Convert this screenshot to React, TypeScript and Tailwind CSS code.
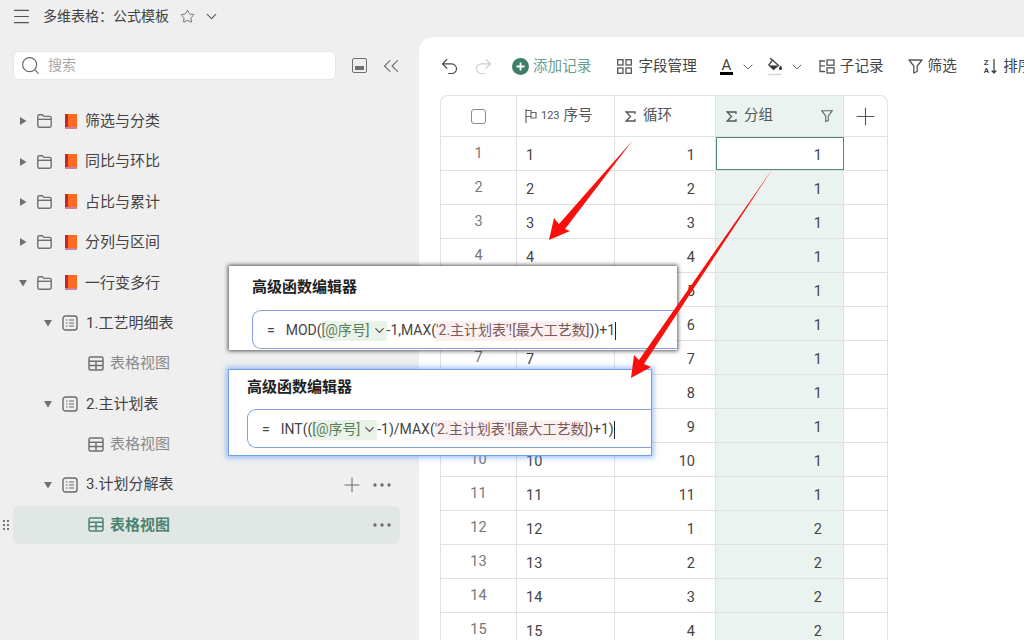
import { ChevronDown, ChevronsLeft, Ellipsis, Menu, Plus, Redo2, Search, Star, Undo2 } from 'lucide-react';

const FONT = 'font-["Roboto","Noto_Sans_CJK_SC",sans-serif]';

function FolderIcon() {
  return (
    <svg width="15" height="14" viewBox="0 0 15 14" fill="none" stroke="#707070" strokeWidth="1.400">
      <path d="M.8 2.400C.8 1.400 1.400.8 2.400.8h3L7 2.400h5.600c1 0 1.600.6 1.600 1.600v7.600c0 1-.6 1.600-1.600 1.600H2.400c-1 0-1.600-.6-1.600-1.600z" />
      <path d="M.8 5.300h13.400" />
    </svg>
  );
}

function BookIcon() {
  return (
    <svg width="12" height="15" viewBox="0 0 12 15">
      <rect x="0" y="0" width="12" height="13.500" fill="#ff6a21" />
      <rect x="0" y="0" width="3" height="13.500" fill="#c6272c" />
      <rect x="0" y="13" width="12" height="2" fill="#c78596" />
    </svg>
  );
}

function ListIcon() {
  return (
    <svg width="16" height="16" viewBox="0 0 16 16" fill="none" stroke="#6b6b6b" strokeWidth="1.400">
      <rect x="1" y="1" width="14" height="14" rx="2.500" />
      <path d="M4 5h1.500M7 5h5M4 8h1.500M7 8h5M4 11h1.500M7 11h5" strokeWidth="1.200" />
    </svg>
  );
}

function GridIcon({ color = '#707070' }: { color?: string }) {
  return (
    <svg width="16" height="15" viewBox="0 0 16 15" fill="none" stroke={color} strokeWidth="1.500">
      <rect x="1" y="1" width="14" height="13" rx="1.500" />
      <path d="M1 5.300h14M1 9.600h14M8 5.300V14" />
    </svg>
  );
}

function SigmaIcon() {
  return (
    <svg width="11" height="11" viewBox="0 0 11 11" fill="none" stroke="#555" strokeWidth="1.300">
      <path d="M10 3V1H1.200l4.300 4.500L1.200 10H10V8" />
    </svg>
  );
}

function Caret({ open }: { open: boolean }) {
  return (
    <svg width="8" height="8" viewBox="0 0 8 8" fill="#707070">
      {open ? <path d="M0 1h8L4 7.500z" /> : <path d="M1 0v8l6.500-4z" />}
    </svg>
  );
}

const tree = [
  { label: '筛选与分类', level: 0 },
  { label: '同比与环比', level: 0 },
  { label: '占比与累计', level: 0 },
  { label: '分列与区间', level: 0 },
  { label: '一行变多行', level: 0, open: true },
  { label: '1.工艺明细表', level: 1 },
  { label: '表格视图', level: 2 },
  { label: '2.主计划表', level: 1 },
  { label: '表格视图', level: 2 },
];

function TreeRow({ row }: { row: (typeof tree)[number] }) {
  if (row.level === 2) {
    return (
      <div className="h-[40.4px] flex items-center pl-[88px] gap-[6px] text-[15px] text-[#8a8a8a]">
        <GridIcon />
        <span>{row.label}</span>
      </div>
    );
  }
  if (row.level === 1) {
    return (
      <div className="h-[40.4px] flex items-center pl-[44px] text-[15px] text-[#444]">
        <Caret open />
        <span className="ml-[10px] mr-[8px]"><ListIcon /></span>
        <span>{row.label}</span>
      </div>
    );
  }
  return (
    <div className="h-[40.4px] flex items-center pl-[19px] text-[15px] text-[#444]">
      <Caret open={!!row.open} />
      <span className="ml-[10px] mr-[13px] flex"><FolderIcon /></span>
      <BookIcon />
      <span className="ml-[8px]">{row.label}</span>
    </div>
  );
}

function Sidebar() {
  return (
    <div className="w-[419px] shrink-0 flex flex-col">
      <div className="h-[32px] flex items-center pl-[11px] text-[#555]">
        <Menu size={21} strokeWidth={1.200} />
        <span className="ml-[11px] text-[14px] text-[#444]">多维表格{'\uFF1A'}公式模板</span>
        <Star size={15} strokeWidth={1.300} className="ml-[11px]" />
        <ChevronDown size={17} strokeWidth={1.500} className="ml-[8px]" />
      </div>
      <div className="mt-[19px] flex items-center pl-[13px]">
        <div className="w-[323px] h-[29px] bg-white rounded-[6px] flex items-center pl-[6px] border border-[#e6e6e6]">
          <Search size={21} strokeWidth={1.300} className="text-[#666]" />
          <span className="ml-[7px] text-[14px] text-[#aaa]">搜索</span>
        </div>
        <div className="ml-[16px] w-[15px] h-[15px] rounded-[2px] border-[1.500px] border-[#707070] flex items-end justify-center pb-[2px]">
          <div className="w-[9px] h-[4px] bg-[#707070]" />
        </div>
        <ChevronsLeft size={26} strokeWidth={1.000} className="ml-[11px] text-[#707070]" />
      </div>
      <div className="mt-[21px]">
        {tree.map((row, i) => (
          <TreeRow key={i} row={row} />
        ))}
        <div className="h-[40.4px] flex items-center pl-[44px] pr-[25px] text-[15px] text-[#444]">
          <Caret open />
          <span className="ml-[10px] mr-[8px]"><ListIcon /></span>
          <span>3.计划分解表</span>
          <Plus size={24} strokeWidth={1.000} className="ml-auto text-[#666]" />
          <Ellipsis size={24} strokeWidth={1.300} className="ml-[6px] text-[#666]" />
        </div>
        <div className="relative h-[38px] ml-[13px] mr-[19px] mt-[1px] bg-[#e1e7e4] rounded-[6px] flex items-center pl-[75px] pr-[6px] gap-[6px] text-[15px] font-bold text-[#4b8270]">
          <div className="absolute left-[-10px] top-[14px] grid grid-cols-2 gap-x-[2px] gap-y-[2px]">
            {[0, 1, 2, 3, 4, 5].map((d) => (
              <span key={d} className="w-[2px] h-[2px] bg-[#777]" />
            ))}
          </div>
          <GridIcon color="#4b8270" />
          <span>表格视图</span>
          <Ellipsis size={24} strokeWidth={1.300} className="ml-auto text-[#666]" />
        </div>
      </div>
    </div>
  );
}

function Toolbar() {
  return (
    <div className="h-[58px] flex items-center pl-[20px] pt-[1px] whitespace-nowrap text-[14.600px] text-[#444] [&>*]:shrink-0">
      <Undo2 size={21} strokeWidth={1.300} />
      <Redo2 size={21} strokeWidth={1.300} className="ml-[13px] text-[#ccc]" />
      <svg className="ml-[18px]" width="17" height="17" viewBox="0 0 17 17">
        <circle cx="8.500" cy="8.500" r="8.500" fill="#3f7d6b" />
        <path d="M8.500 4.500v8M4.500 8.500h8" stroke="#fff" strokeWidth="1.800" />
      </svg>
      <span className="ml-[4px] text-[#6a9c8d]">添加记录</span>
      <svg className="ml-[26px]" width="15" height="15" viewBox="0 0 15 15" fill="none" stroke="#555" strokeWidth="1.300">
        <rect x="0.700" y="0.700" width="5.300" height="5.300" />
        <rect x="9" y="0.700" width="5.300" height="5.300" />
        <rect x="0.700" y="9" width="5.300" height="5.300" />
        <rect x="9" y="9" width="5.300" height="5.300" />
      </svg>
      <span className="ml-[6px]">字段管理</span>
      <span className="ml-[23px] w-[13px] flex flex-col items-center text-[15px] leading-[14px] text-[#444]">
        A<span className="w-[13px] h-[3px] bg-black" />
      </span>
      <ChevronDown size={16} strokeWidth={1.500} className="ml-[7px] text-[#666]" />
      <svg className="ml-[11px]" width="17" height="19" viewBox="0 0 17 19" fill="none" stroke="#444" strokeWidth="1.300">
        <path d="M3 1 5.500 3.500" />
        <path d="M5.500 3 11.500 8.500 6.500 12.500 1.800 8z" />
        <path d="M2.500 8.500h8L6.500 12.500z" fill="#333" stroke="none" />
        <path d="M13.500 8.500c1 1.500 1.500 2.300 1.500 3a1.500 1.500 0 0 1-3 0c0-.7.5-1.500 1.500-3z" fill="#333" stroke="none" />
        <path d="M1 17.500h13" stroke="#d5d5d5" strokeWidth="1.500" />
      </svg>
      <ChevronDown size={16} strokeWidth={1.500} className="ml-[5px] text-[#666]" />
      <svg className="ml-[14px]" width="16" height="15" viewBox="0 0 16 15" fill="none" stroke="#555" strokeWidth="1.300">
        <path d="M1 1v12.300M1 2h5M1 12.500h5" />
        <path d="M1 6.800h5" />
        <rect x="8" y="1" width="7" height="5.200" />
        <rect x="8" y="8.800" width="7" height="5.200" />
      </svg>
      <span className="ml-[5px]">子记录</span>
      <svg className="ml-[24px]" width="15" height="15" viewBox="0 0 15 15" fill="none" stroke="#555" strokeWidth="1.300">
        <path d="M1 1h13L9.200 7v5.500l-3.400 1.500V7z" strokeLinejoin="round" />
      </svg>
      <span className="ml-[5px]">筛选</span>
      <span className="ml-[27px] flex items-center gap-[2px]">
        <span className="flex flex-col text-[8px] leading-[8px] font-bold text-[#444]">
          <span>Z</span>
          <span>A</span>
        </span>
        <svg width="6" height="15" viewBox="0 0 6 15" fill="none" stroke="#444" strokeWidth="1.300">
          <path d="M3 0v14M.7 11.500 3 14l2.300-2.500" />
        </svg>
      </span>
      <span className="ml-[6px]">排序</span>
    </div>
  );
}

const loop = [1, 2, 3, 4, 5, 6, 7, 8, 9, 10, 11, 1, 2, 3, 4];
const covered = [4, 5, 7, 8];
const COLS = 'grid grid-cols-[76px_98px_101px_128px_1fr]';

function Table() {
  return (
    <div className="ml-[21px] w-[448px] border-t border-l border-r border-[#e1e1e1] rounded-t-[8px] text-[14.500px] text-[#444]">
      <div className={`${COLS} h-[41px] border-b border-[#e1e1e1]`}>
        <div className="flex items-center justify-center border-r border-[#e1e1e1]">
          <span className="w-[15px] h-[15px] rounded-[3px] border border-[#8c8c8c]" />
        </div>
        <div className="flex items-center pl-[8px] border-r border-[#e1e1e1] text-[#555]">
          <svg width="12" height="14" viewBox="0 0 12 14" fill="none" stroke="#666" strokeWidth="1.200">
            <path d="M1 0v14M1 1.500h5v6H1M6 3.500h5v5.500H6V7.500" />
          </svg>
          <span className="ml-[4px] text-[11px]">123</span>
          <span className="ml-[4px]">序号</span>
        </div>
        <div className="flex items-center pl-[10px] border-r border-[#e1e1e1] text-[#555]">
          <SigmaIcon />
          <span className="ml-[7px]">循环</span>
        </div>
        <div className="flex items-center pl-[10px] border-r border-[#e1e1e1] bg-[#ebf3f1] text-[#555]">
          <SigmaIcon />
          <span className="ml-[7px]">分组</span>
          <svg className="ml-auto mr-[10px]" width="12" height="12" viewBox="0 0 12 12" fill="none" stroke="#666" strokeWidth="1.100">
            <path d="M.7.700h10.600L7.300 6v4.500l-2.600 1V6z" />
          </svg>
        </div>
        <div className="flex items-center justify-center">
          <Plus size={29} strokeWidth={0.900} className="text-[#555]" />
        </div>
      </div>
      {loop.map((n, i) => (
        <div key={i} className={`${COLS} h-[34px] border-b border-[#e1e1e1]`}>
          <div className="flex items-center justify-center border-r border-[#e1e1e1] text-[#777] pt-[1px]">
            {covered.includes(i) ? '' : i + 1}
          </div>
          <div className="flex items-center pl-[9px] pt-[5px] border-r border-[#e1e1e1]">
            {covered.includes(i) ? '' : i + 1}
          </div>
          <div className="flex items-center justify-end pr-[20px] pt-[5px] border-r border-[#e1e1e1]">{n}</div>
          <div
            className={`flex items-center justify-end pr-[21px] pt-[5px] border-r border-[#e1e1e1] ${
              i === 0 ? 'bg-white outline-[1.500px] outline-[#4f8a78] -outline-offset-1' : 'bg-[#ebf3f1]'
            }`}
          >
            {i < 11 ? 1 : 2}
          </div>
          <div />
        </div>
      ))}
    </div>
  );
}

function Formula({ before, token, mid, pink, after }: { before: string; token: string; mid: string; pink: string; after: string }) {
  return (
    <div className="h-[39px] rounded-l-[9px] border border-r-0 border-[#83a0e2] flex items-center pl-[14px] pt-[2px] text-[14px] text-[#444] whitespace-nowrap">
      <span className="mr-[11px]">=</span>
      <span>{before}</span>
      <span className="h-[20px] flex items-center bg-[#eaf3e8] text-[#5c7d5c]">
        {token}
        <ChevronDown size={15} className="ml-[2px] text-[#555]" />
      </span>
      <span>{mid}</span>
      <span className="h-[20px] flex items-center bg-[#fbf0f0] text-[#7a5a5a]">{pink}</span>
      <span>{after}</span>
      <span className="w-px h-[18px] bg-[#222]" />
    </div>
  );
}

function Arrows() {
  return (
    <svg className="absolute left-0 top-0 pointer-events-none" width="1024" height="640" viewBox="0 0 1024 640">
      <polygon points="633,140 565,229 570,231 549,240 554,218 559,224" fill="#f8110c" />
      <polygon points="773,168 644,364 651,367 631,378 634,355 639,360" fill="#f8110c" />
    </svg>
  );
}

export default function App() {
  return (
    <div className={`${FONT} relative w-[1024px] h-[640px] overflow-hidden bg-[#efefef] flex`}>
      <Sidebar />
      <div className="flex-1 mt-[37px] bg-white rounded-tl-[14px] overflow-hidden">
        <Toolbar />
        <Table />
      </div>
      <div className="absolute left-[229px] top-[266px] w-[448px] h-[84px] bg-white shadow-[0_0_4px_1px_rgba(0,0,0,0.65)] pl-[23px] overflow-hidden">
        <div className="mt-[11px] mb-[13px] text-[15px] font-bold text-[#222] leading-[20px]">高级函数编辑器</div>
        <Formula before="MOD(" token="[@序号]" mid="-1,MAX(" pink="'2.主计划表'![最大工艺数]" after="))+1" />
      </div>
      <div className="absolute left-[228px] top-[369px] w-[424px] h-[87px] bg-white border border-[#6f9ff0] shadow-[0_0_5px_2px_rgba(90,150,240,0.55)] pl-[18px] overflow-hidden">
        <div className="mt-[7px] mb-[12px] text-[15px] font-bold text-[#222] leading-[20px]">高级函数编辑器</div>
        <Formula before="INT((" token="[@序号]" mid="-1)/MAX(" pink="'2.主计划表'![最大工艺数]" after=")+1)" />
      </div>
      <Arrows />
    </div>
  );
}
